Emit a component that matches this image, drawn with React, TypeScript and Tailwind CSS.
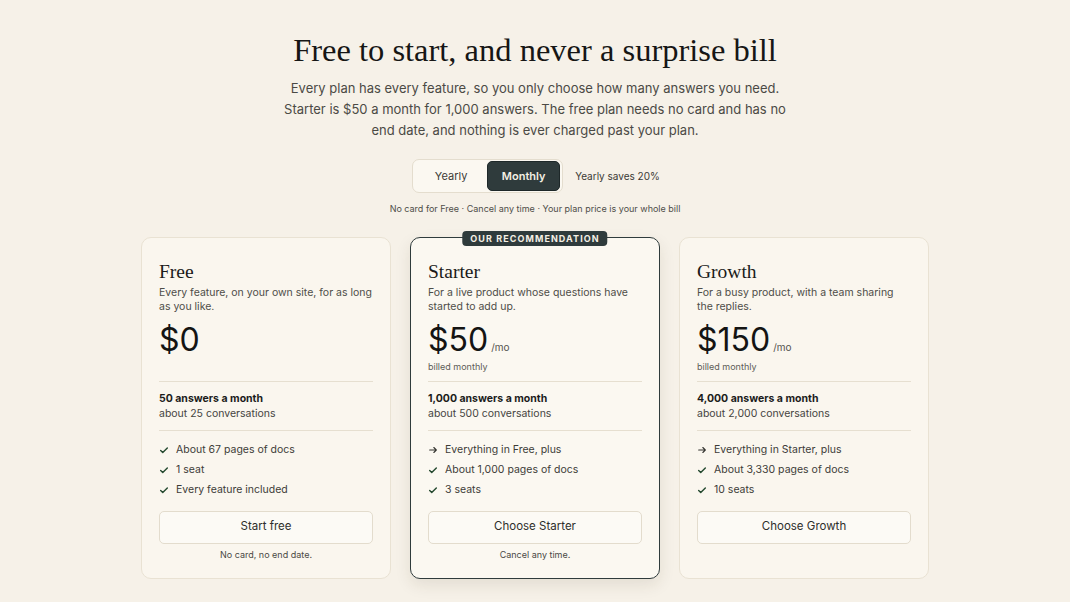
import clsx from 'clsx'

type Plan = {
  name: string
  blurb: string
  price: string
  perMonth: boolean
  answers: string
  convos: string
  features: { text: string; kind: 'check' | 'arrow' }[]
  cta: string
  note?: string
  recommended?: boolean
}

const plans: Plan[] = [
  {
    name: 'Free',
    blurb: 'Every feature, on your own site, for as long as you like.',
    price: '$0',
    perMonth: false,
    answers: '50 answers a month',
    convos: 'about 25 conversations',
    features: [
      { text: 'About 67 pages of docs', kind: 'check' },
      { text: '1 seat', kind: 'check' },
      { text: 'Every feature included', kind: 'check' },
    ],
    cta: 'Start free',
    note: 'No card, no end date.',
  },
  {
    name: 'Starter',
    blurb: 'For a live product whose questions have started to add up.',
    price: '$50',
    perMonth: true,
    answers: '1,000 answers a month',
    convos: 'about 500 conversations',
    features: [
      { text: 'Everything in Free, plus', kind: 'arrow' },
      { text: 'About 1,000 pages of docs', kind: 'check' },
      { text: '3 seats', kind: 'check' },
    ],
    cta: 'Choose Starter',
    note: 'Cancel any time.',
    recommended: true,
  },
  {
    name: 'Growth',
    blurb: 'For a busy product, with a team sharing the replies.',
    price: '$150',
    perMonth: true,
    answers: '4,000 answers a month',
    convos: 'about 2,000 conversations',
    features: [
      { text: 'Everything in Starter, plus', kind: 'arrow' },
      { text: 'About 3,330 pages of docs', kind: 'check' },
      { text: '10 seats', kind: 'check' },
    ],
    cta: 'Choose Growth',
  },
]

function Check() {
  return (
    <svg viewBox="0 0 12 12" className="h-[10px] w-[10px]" fill="none" stroke="#24492f" strokeWidth="1.7" strokeLinecap="round" strokeLinejoin="round">
      <path d="M2 6.5l2.5 2.5L10 3.5" />
    </svg>
  )
}

function Arrow() {
  return (
    <svg viewBox="0 0 12 12" className="h-[10px] w-[10px]" fill="none" stroke="#33332f" strokeWidth="1.3" strokeLinecap="round" strokeLinejoin="round">
      <path d="M2 6h8M7 3l3 3-3 3" />
    </svg>
  )
}

function PlanCard({ plan }: { plan: Plan }) {
  return (
    <div
      className={clsx(
        'relative flex flex-col rounded-[10px] px-[17px] pt-[22px] pb-[17px]',
        plan.recommended
          ? 'border border-[#2f3b3c] bg-[#fbf8f1] shadow-[0_6px_16px_rgba(60,45,20,0.10)]'
          : 'border border-[#e9e2d3] bg-[#faf6ee]'
      )}
    >
      {plan.recommended && (
        <div className="absolute -top-[7px] left-1/2 -translate-x-1/2 rounded-[4px] bg-[#2f3b3c] px-[8px] py-[1px] text-[9px] font-bold tracking-[0.12em] whitespace-nowrap text-[#f4efe4]">
          OUR RECOMMENDATION
        </div>
      )}
      <h2 className="font-['Liberation_Serif',serif] text-[19.5px] leading-[24px] text-[#1b1b1a]">{plan.name}</h2>
      <p className="mt-[2px] h-[28px] text-[10.5px] leading-[14px] text-[#4e4d48]">{plan.blurb}</p>
      <div className="mt-[6px] flex items-baseline gap-[3px]">
        <span className="text-[32px] leading-[40px] text-[#141413]">{plan.price}</span>
        {plan.perMonth && <span className="text-[10px] text-[#55544f]">/mo</span>}
      </div>
      <p className={clsx('mt-[1px] text-[9px] leading-[12px] text-[#5d5c57]', !plan.perMonth && 'invisible')}>billed monthly</p>
      <div className="mt-[8px] border-t border-[#e6dfd0]" />
      <p className="mt-[9px] text-[10.5px] leading-[15px] font-bold text-[#1c1c1b]">{plan.answers}</p>
      <p className="text-[10.5px] leading-[16px] text-[#45443f]">{plan.convos}</p>
      <div className="mt-[8px] border-t border-[#e6dfd0]" />
      <ul className="mt-[9px] flex flex-col">
        {plan.features.map((f) => (
          <li key={f.text} className="flex h-[20px] items-center gap-[7px] text-[10.5px] text-[#3d3c38]">
            {f.kind === 'check' ? <Check /> : <Arrow />}
            {f.text}
          </li>
        ))}
      </ul>
      <button
        type="button"
        className="mt-[11px] h-[33px] rounded-[5px] border border-[#e3dccd] bg-[#fcfaf5] text-[11.5px] text-[#2e2e2b]"
      >
        {plan.cta}
      </button>
      <p className={clsx('mt-[5px] h-[12px] text-center text-[9px] leading-[12px] text-[#4a4945]', !plan.note && 'invisible')}>
        {plan.note ?? '.'}
      </p>
    </div>
  )
}

export default function App() {
  return (
    <main className="flex min-h-[602px] flex-col items-center bg-[#f6f1e8] pt-[30px] font-['Inter','Liberation_Sans',sans-serif]">
      <h1 className="font-['Liberation_Serif',serif] text-[32.5px] leading-[40px] text-[#161615]">
        Free to start, and never a surprise bill
      </h1>
      <p className="mt-[8px] w-[512px] text-center text-[13px] leading-[21px] text-[#4b4a45]">
        Every plan has every feature, so you only choose how many answers you need. Starter is $50 a month for 1,000
        answers. The free plan needs no card and has no end date, and nothing is ever charged past your plan.
      </p>

      <div className="mt-[18px] flex items-center gap-[12px] pl-[2px]">
        <div className="flex h-[34px] items-center rounded-[7px] border border-[#e4ddce] bg-[#fbf8f1] p-[2px]">
          <button type="button" className="h-[29px] w-[72px] text-[11px] text-[#3b3a36]">
            Yearly
          </button>
          <button
            type="button"
            className="h-[30px] w-[73px] rounded-[5px] border border-[#1e2829] bg-[#2f3b3c] text-[11px] font-semibold text-[#f5f0e3]"
          >
            Monthly
          </button>
        </div>
        <span className="text-[10px] text-[#3b3a36]">Yearly saves 20%</span>
      </div>
      <p className="mt-[9px] text-[9px] text-[#4f4e49]">
        No card for Free · Cancel any time · Your plan price is your whole bill
      </p>

      <section className="mt-[21px] grid w-[788px] grid-cols-3 gap-[19px]">
        {plans.map((p) => (
          <PlanCard key={p.name} plan={p} />
        ))}
      </section>
    </main>
  )
}
